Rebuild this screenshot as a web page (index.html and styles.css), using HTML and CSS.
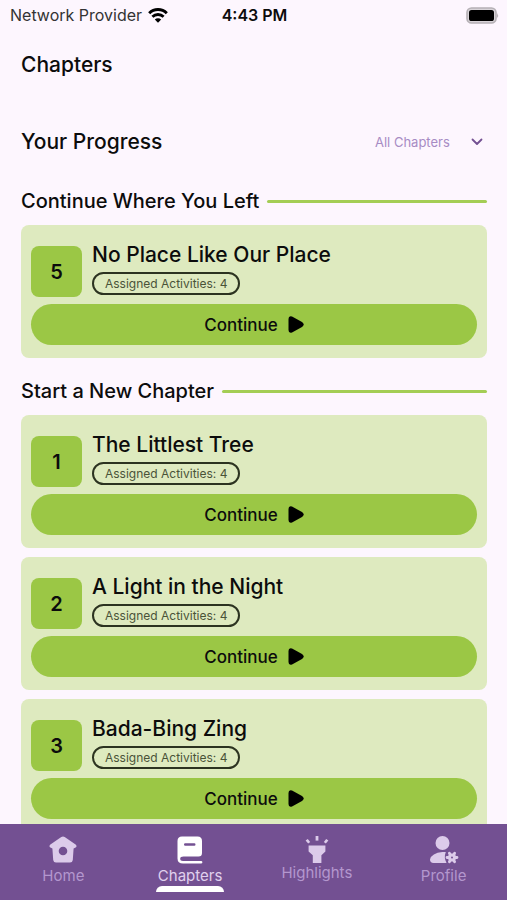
FILE: index.html
```html
<!DOCTYPE html>
<html lang="en">
<head>
    <meta charset="UTF-8">
    <meta name="viewport" content="width=device-width, initial-scale=1.0">
    <title>Chapters</title>
    <link rel="stylesheet" href="styles.css">
</head>
<body>
    <div class="status-bar">
        <div class="carrier">
            <span>Network Provider</span>
            <svg class="wifi" viewBox="0 0 20 15" aria-hidden="true">
                <path d="M1.2 5.2 A12.6 12.6 0 0 1 18.8 5.2" fill="none" stroke="#000" stroke-width="3"/>
                <path d="M4.4 8.8 A8 8 0 0 1 15.6 8.8" fill="none" stroke="#000" stroke-width="2.8"/>
                <path d="M6.8 11.6 A4.6 4.6 0 0 1 13.2 11.6 L10 14.8 Z" fill="#000"/>
            </svg>
        </div>
        <div class="clock">4:43 PM</div>
        <svg class="battery" viewBox="0 0 33 17" aria-hidden="true">
            <rect x="1" y="1" width="29" height="15" rx="4.5" fill="#d8d3d8" stroke="#b5b0b5" stroke-width="1.6"/>
            <rect x="3" y="3" width="25" height="11" rx="2.6" fill="#000"/>
            <path d="M31.2 6 Q33 8.5 31.2 11 Z" fill="#aaa5aa"/>
        </svg>
    </div>

    <header class="page-header">
        <h1>Chapters</h1>
    </header>

    <main class="content">
        <div class="progress-row">
            <h2>Your Progress</h2>
            <div class="filter">
                <select id="chapterFilter" aria-label="Filter chapters">
                    <option selected>All Chapters</option>
                </select>
                <svg class="chevron" viewBox="0 0 12 8" aria-hidden="true">
                    <path d="M1.5 1.5 L6 6 L10.5 1.5" fill="none" stroke="#735092" stroke-width="1.8" stroke-linecap="round" stroke-linejoin="round"/>
                </svg>
            </div>
        </div>

        <section>
            <h3 class="section-title">Continue Where You Left</h3>
            <div class="cards">
                <article class="card">
                    <div class="card-head">
                        <div class="number">5</div>
                        <div class="info">
                            <h4>No Place Like Our Place</h4>
                            <span class="pill">Assigned Activities: 4</span>
                        </div>
                    </div>
                    <button type="button" class="continue">
                        Continue
                        <svg class="play" viewBox="0 0 16 17" aria-hidden="true"><path d="M0.5 3 Q0.5 -0.4 4 0.6 L14 6 Q17.4 8.5 14 11 L4 16.4 Q0.5 17.4 0.5 14 Z"/></svg>
                    </button>
                </article>
            </div>
        </section>

        <section>
            <h3 class="section-title">Start a New Chapter</h3>
            <div class="cards">
                <article class="card">
                    <div class="card-head">
                        <div class="number">1</div>
                        <div class="info">
                            <h4>The Littlest Tree</h4>
                            <span class="pill">Assigned Activities: 4</span>
                        </div>
                    </div>
                    <button type="button" class="continue">
                        Continue
                        <svg class="play" viewBox="0 0 16 17" aria-hidden="true"><path d="M0.5 3 Q0.5 -0.4 4 0.6 L14 6 Q17.4 8.5 14 11 L4 16.4 Q0.5 17.4 0.5 14 Z"/></svg>
                    </button>
                </article>
                <article class="card">
                    <div class="card-head">
                        <div class="number">2</div>
                        <div class="info">
                            <h4>A Light in the Night</h4>
                            <span class="pill">Assigned Activities: 4</span>
                        </div>
                    </div>
                    <button type="button" class="continue">
                        Continue
                        <svg class="play" viewBox="0 0 16 17" aria-hidden="true"><path d="M0.5 3 Q0.5 -0.4 4 0.6 L14 6 Q17.4 8.5 14 11 L4 16.4 Q0.5 17.4 0.5 14 Z"/></svg>
                    </button>
                </article>
                <article class="card">
                    <div class="card-head">
                        <div class="number">3</div>
                        <div class="info">
                            <h4>Bada-Bing Zing</h4>
                            <span class="pill">Assigned Activities: 4</span>
                        </div>
                    </div>
                    <button type="button" class="continue">
                        Continue
                        <svg class="play" viewBox="0 0 16 17" aria-hidden="true"><path d="M0.5 3 Q0.5 -0.4 4 0.6 L14 6 Q17.4 8.5 14 11 L4 16.4 Q0.5 17.4 0.5 14 Z"/></svg>
                    </button>
                </article>
            </div>
        </section>
    </main>

    <nav class="tabs">
        <a href="#home" class="tab">
            <svg width="28" height="30" viewBox="0 0 28 30" aria-hidden="true">
                <path fill="currentColor" fill-rule="evenodd" d="M12.3 1.1 Q14 0 15.7 1.1 L26.6 8.6 Q28.4 10.4 26.6 11.6 L24.6 12.4 L23.8 24 Q23.5 26.5 21 26.5 L7 26.5 Q4.6 26.5 4.2 24 L3.4 12.4 L1.4 11.6 Q-0.4 10.4 1.4 8.6 Z M14 10.7 a4.3 4.3 0 1 0 0 8.6 a4.3 4.3 0 1 0 0 -8.6 Z"/>
            </svg>
            <span>Home</span>
        </a>
        <a href="#chapters" class="tab active" aria-current="page">
            <svg width="26" height="30" viewBox="0 0 26 30" aria-hidden="true">
                <path fill="currentColor" fill-rule="evenodd" d="M5 0.5 H20.5 Q25 0.5 25 5 V17 Q25 20.5 21.5 20.5 H6.5 Q3.2 20.5 3.2 22.7 Q3.2 24.9 6 24.9 H24 Q25.4 24.9 25.4 26.2 Q25.4 27.5 24 27.5 H6 Q0.5 27.5 0.5 22.5 V5 Q0.5 0.5 5 0.5 Z M8.2 7.2 Q7 7.2 7 8.5 Q7 9.8 8.2 9.8 H17.3 Q18.5 9.8 18.5 8.5 Q18.5 7.2 17.3 7.2 Z"/>
            </svg>
            <span>Chapters</span>
        </a>
        <a href="#highlights" class="tab">
            <svg width="24" height="27" viewBox="0 0 24 27" aria-hidden="true">
                <g fill="currentColor">
                    <path d="M10.6 0 H13.4 V4.6 H10.6 Z"/>
                    <path d="M0.6 4.4 L2.8 3 L5.2 5.9 L3.2 7.6 Z"/>
                    <path d="M23.4 4.4 L21.2 3 L18.8 5.9 L20.8 7.6 Z"/>
                    <path d="M3.6 9.6 H20.4 V15.6 L16.4 19.2 V27 H7.8 V19.2 L3.6 15.6 Z"/>
                </g>
            </svg>
            <span>Highlights</span>
        </a>
        <a href="#profile" class="tab">
            <svg width="30" height="30" viewBox="0 0 30 30" aria-hidden="true">
                <g fill="currentColor">
                    <circle cx="13.5" cy="7" r="7"/>
                    <path d="M13.5 16 H16.8 Q14.6 21.5 17.5 27 H4.5 Q1 26.6 1 23.5 Q2.5 17 13.5 16 Z"/>
                    <circle cx="23" cy="21.5" r="4"/>
                </g>
                <path d="M20.4 17.2 L25.6 25.8 M25.6 17.2 L20.4 25.8 M18 21.5 H28" stroke="currentColor" stroke-width="2.8" stroke-linecap="round"/>
                <circle cx="23" cy="21.5" r="1" fill="#735092"/>
            </svg>
            <span>Profile</span>
        </a>
    </nav>
</body>
</html>
```
FILE: styles.css
```css
* {
    box-sizing: border-box;
}
body {
    font-family: Inter, "Liberation Sans", sans-serif;
    background-color: #fdf6fe;
    color: #0c0c0c;
    display: flex;
    flex-direction: column;
    height: 100vh;
    margin: 0;
}
h1, h2, h3, h4 {
    margin: 0;
    font-weight: 500;
}
.status-bar {
    display: grid;
    grid-template-columns: 1fr auto 1fr;
    align-items: center;
    height: 30px;
    padding: 0 8px 0 10px;
    font-size: 16px;
    flex-shrink: 0;
}
.carrier {
    display: flex;
    align-items: center;
    gap: 6px;
    color: #333;
}
.wifi {
    width: 20px;
    height: 15px;
}
.clock {
    font-weight: 600;
}
.battery {
    width: 33px;
    height: 17px;
    justify-self: end;
}
.page-header {
    padding: 20px 21px;
    flex-shrink: 0;
}
.page-header h1 {
    font-size: 21px;
    line-height: 30px;
}
.content {
    flex: 1;
    min-height: 0;
    padding: 27px 20px 20px 21px;
    overflow-y: auto;
    scrollbar-width: none;
}
.progress-row {
    display: flex;
    align-items: center;
    justify-content: space-between;
    margin-bottom: 32px;
}
.progress-row h2 {
    font-size: 21px;
    line-height: 30px;
}
.filter {
    display: grid;
    align-items: center;
    padding-right: 4px;
}
.filter select {
    grid-area: 1 / 1;
    appearance: none;
    width: 108px;
    padding: 0;
    border: none;
    background: none;
    color: #a78bc4;
    font-family: inherit;
    font-size: 13px;
    cursor: pointer;
}
.chevron {
    grid-area: 1 / 1;
    justify-self: end;
    width: 12px;
    height: 8px;
    pointer-events: none;
}
.section-title {
    display: flex;
    align-items: center;
    gap: 8px;
    margin-bottom: 12px;
    font-size: 20px;
    line-height: 24px;
}
.section-title::after {
    content: "";
    flex: 1;
    height: 3px;
    border-radius: 2px;
    background: #a4cd55;
}
section + section {
    margin-top: 21px;
}
.cards {
    display: flex;
    flex-direction: column;
    gap: 9px;
}
.card {
    padding: 16px 10px 13px;
    border-radius: 8px;
    background: #deeabf;
}
.card-head {
    display: flex;
    align-items: flex-end;
    gap: 10px;
    margin-bottom: 7px;
}
.number {
    display: flex;
    align-items: center;
    justify-content: center;
    width: 51px;
    height: 51px;
    border-radius: 8px;
    background: #9bc745;
    font-size: 20px;
    font-weight: 600;
}
.info {
    display: flex;
    flex-direction: column;
    align-items: flex-start;
    gap: 3px;
    padding-bottom: 2px;
}
.info h4 {
    font-size: 21px;
    line-height: 28px;
}
.pill {
    padding: 0 11px;
    border: 2px solid #2c3320;
    border-radius: 12px;
    color: #4a5338;
    font-size: 12px;
    line-height: 19px;
}
.continue {
    display: flex;
    align-items: center;
    justify-content: center;
    gap: 10px;
    width: 100%;
    height: 41px;
    border: none;
    border-radius: 21px;
    background: #9bc745;
    color: #0c0c0c;
    font-family: inherit;
    font-size: 17px;
    font-weight: 500;
    cursor: pointer;
}
.play {
    width: 16px;
    height: 17px;
}
.tabs {
    display: grid;
    grid-template-columns: repeat(4, 1fr);
    height: 76px;
    background: #735092;
    flex-shrink: 0;
}
.tab {
    display: flex;
    flex-direction: column;
    align-items: center;
    padding-top: 12px;
    color: #dccbea;
    font-size: 15px;
    line-height: 20px;
    text-decoration: none;
}
.tab span {
    color: #b397ce;
}
.active {
    color: #fff;
}
.active span {
    color: #e0d0ee;
}
.active::after {
    content: "";
    width: 68px;
    height: 6px;
    border-radius: 6px 6px 0 0;
    background: #fff;
}
```
